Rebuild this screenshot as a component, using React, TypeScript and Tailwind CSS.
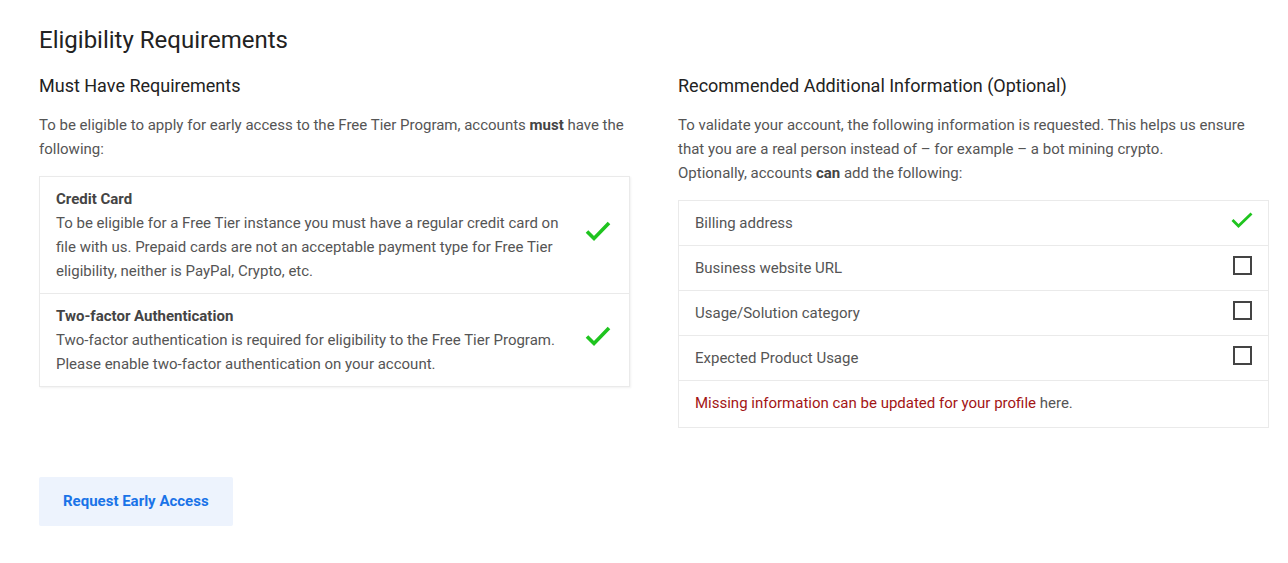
import React from "react";

const BigCheck = () => (
  <svg width="28" height="24" viewBox="0 0 28 24" className="shrink-0">
    <polyline points="3,12.5 10,19.5 25,4" fill="none" stroke="#1fc41f" strokeWidth="3.6" strokeLinecap="butt" strokeLinejoin="miter" />
  </svg>
);

const SmallCheck = () => (
  <svg width="22" height="16" viewBox="0 0 22 16" className="shrink-0">
    <polyline points="1.5,8 7.5,14 20.5,1.5" fill="none" stroke="#1fc41f" strokeWidth="2.8" />
  </svg>
);

const Box = () => (
  <div className="w-[19px] h-[19px] border-2 border-[#444] bg-white" />
);

export default function App() {
  return (
    <div
      className="bg-white min-h-[563px] pl-[39px] pr-[19px] pt-6 text-[#555]"
      style={{ fontFamily: "Roboto, 'Noto Sans', sans-serif" }}
    >
      <h1 className="text-[24px] leading-8 text-[#222] font-normal">Eligibility Requirements</h1>
      <div className="grid grid-cols-[591px_591px] gap-x-12 mt-[18px] items-start">
        <div>
          <h2 className="text-[18px] leading-6 text-[#222] font-normal">Must Have Requirements</h2>
          <p className="text-[15px] leading-6 mt-[15px]">
            To be eligible to apply for early access to the Free Tier Program, accounts{" "}
            <b className="font-bold text-[#444]">must</b> have the following:
          </p>
          <div className="mt-[15px] border border-[#eaeaea] shadow-[1px_1px_2px_rgba(0,0,0,0.06)]">
            <div className="flex items-center pl-4 pr-[17px] pt-[10px] pb-[10px] border-b border-[#eaeaea]">
              <div className="flex-1 text-[15px] leading-6 pr-4">
                <div className="font-bold text-[#444]">Credit Card</div>
                <div>
                  To be eligible for a Free Tier instance you must have a regular credit card on file with us. Prepaid cards are not an acceptable payment type for Free Tier eligibility, neither is PayPal, Crypto, etc.
                </div>
              </div>
              <div className="-mt-2">
                <BigCheck />
              </div>
            </div>
            <div className="flex items-center pl-4 pr-[17px] pt-[10px] pb-[10px]">
              <div className="flex-1 text-[15px] leading-6 pr-4">
                <div className="font-bold text-[#444]">Two-factor Authentication</div>
                <div>
                  Two-factor authentication is required for eligibility to the Free Tier Program. Please enable two-factor authentication on your account.
                </div>
              </div>
              <div className="-mt-2">
                <BigCheck />
              </div>
            </div>
          </div>
        </div>
        <div>
          <h2 className="text-[18px] leading-6 text-[#222] font-normal">
            Recommended Additional Information (Optional)
          </h2>
          <p className="text-[15px] leading-6 mt-[15px]">
            To validate your account, the following information is requested. This helps us ensure that you are a real person instead of – for example – a bot mining crypto.
            <br />
            Optionally, accounts <b className="font-bold text-[#444]">can</b> add the following:
          </p>
          <div className="mt-[15px] border border-[#eaeaea] text-[15px] leading-6">
            {[
              ["Billing address", true],
              ["Business website URL", false],
              ["Usage/Solution category", false],
              ["Expected Product Usage", false],
            ].map(([label, ok], i) => (
              <div
                key={i}
                className="flex items-start justify-between pl-4 pr-4 py-[10px] h-[45px] border-b border-[#eaeaea]"
              >
                <span>{label as string}</span>
                {ok ? (
                  <div className="pt-px -mr-[1px]">
                    <SmallCheck />
                  </div>
                ) : (
                  <Box />
                )}
              </div>
            ))}
            <div className="pl-4 pt-[10px] pb-[12px]">
              <span className="text-[#a31515]">Missing information can be updated for your profile</span>{" "}
              <span>here.</span>
            </div>
          </div>
        </div>
      </div>
      <button className="mt-[49px] h-[49px] px-6 bg-[#edf3fd] text-[#1a73e8] font-bold text-[15px] rounded-[2px]">
        Request Early Access
      </button>
    </div>
  );
}
